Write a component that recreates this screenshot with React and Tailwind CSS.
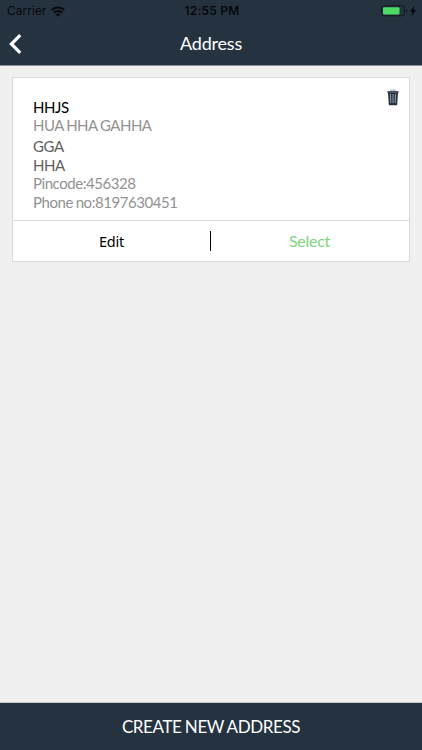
const addresses = [
  {
    id: 1,
    name: 'HHJS',
    street: 'HUA HHA GAHHA',
    city: 'GGA',
    state: 'HHA',
    pincode: '456328',
    phone: '8197630451',
  },
];

function WifiIcon() {
  return (
    <svg className="w-[14px] h-[11px]" viewBox="0 0 14 11" fill="none" stroke="#05080b" strokeWidth="2.1">
      <path d="M0.8 4.1a8.8 8.8 0 0 1 12.4 0" />
      <path d="M3 6.8a5.7 5.7 0 0 1 8 0" />
      <path d="M7 10.8L4.8 8.6a3.1 3.1 0 0 1 4.4 0z" fill="#05080b" stroke="none" />
    </svg>
  );
}

function BatteryIcon() {
  return (
    <svg className="w-[36px] h-[12px]" viewBox="0 0 36 12" fill="none">
      <rect x="0.5" y="0.8" width="23" height="10" rx="2.4" stroke="#10191f" />
      <rect x="2" y="2.2" width="16.5" height="7.2" rx="1" fill="#4cd964" />
      <path d="M25 4v3.8c1.6-.6 1.6-3.2 0-3.8z" fill="#141d25" />
      <path d="M33.6 0.8l-4.6 5.6h2.4L30.4 10.8l4.8-5.7h-2.6z" fill="#05080b" />
    </svg>
  );
}

function TrashIcon() {
  return (
    <svg className="w-[12px] h-[17px]" viewBox="0 0 12 17" fill="none">
      <path d="M3.8 2.4V1.1h4.4v1.3" stroke="#8b949c" strokeWidth="0.9" />
      <path d="M0.4 2.2h11.2v1.6H0.4z" fill="#253341" />
      <path d="M1 3.8h10l-.8 11.6q-.1.9-1 .9H2.8q-.9 0-1-.9z" fill="#253341" />
      <path d="M3.5 5l.3 9M6 5v9M8.5 5l-.3 9" stroke="#a3abb3" strokeWidth="0.9" />
    </svg>
  );
}

function StatusBar() {
  return (
    <div className="grid grid-cols-3 items-center h-[22px] pl-[7px] pr-[5px] font-['Inter',sans-serif] text-[12px] text-[#05080b]">
      <div className="flex items-center gap-[5px]">
        <span>Carrier</span>
        <WifiIcon />
      </div>
      <span className="text-center font-semibold tracking-[0.2px]">12:55 PM</span>
      <div className="flex justify-end">
        <BatteryIcon />
      </div>
    </div>
  );
}

function AddressCard({ address }) {
  return (
    <div className="mx-3 mt-[11px] h-[185px] flex flex-col bg-white border border-[#d9d9d9]">
      <div className="flex justify-between h-[143px] pl-5 pr-[10px] border-b border-[#d9d9d9]">
        <div className="pt-5 text-[15px] leading-[19px] tracking-[-0.45px] [word-spacing:-0.6px] text-[#929292]">
          <p className="text-black">{address.name}</p>
          <p className="-mt-px tracking-[-0.5px]">{address.street}</p>
          <p className="mt-[2px] text-[#606060]">{address.city}</p>
          <p className="text-[#606060]">{address.state}</p>
          <p className="-mt-px">Pincode:{address.pincode}</p>
          <p>Phone no:{address.phone}</p>
        </div>
        <button className="self-start mt-[11px]" aria-label="Delete address">
          <TrashIcon />
        </button>
      </div>
      <div className="flex flex-1 items-center">
        <button className="w-[197px] pt-px text-[14.5px] tracking-[-0.3px] text-black font-['Noto_Sans',sans-serif]">
          Edit
        </button>
        <div className="w-px h-5 bg-black" />
        <button className="w-[197px] pb-px text-[16px] tracking-[-0.25px] text-[#7ed67e]">Select</button>
      </div>
    </div>
  );
}

export default function App() {
  return (
    <div className="flex flex-col h-[750px] w-full bg-[#f0f0f0] font-['Lato',sans-serif]">
      <header className="h-[66px] bg-[#253341] border-b border-[#8b929a]">
        <StatusBar />
        <div className="grid grid-cols-3 items-center h-[43px]">
          <button className="pl-[9px]" aria-label="Back">
            <svg className="w-[13px] h-[20px]" viewBox="0 0 13 20" fill="none" stroke="#fff" strokeWidth="3.2">
              <path d="M11.2 1.2L2.4 10l8.8 8.8" />
            </svg>
          </button>
          <h1 className="text-center text-[18px] tracking-[-0.2px] text-white">Address</h1>
        </div>
      </header>

      <main className="flex-1">
        {addresses.map((address) => (
          <AddressCard key={address.id} address={address} />
        ))}
      </main>

      <button className="h-[48px] bg-[#253341] border-t border-[#c3c7cb] text-[17px] tracking-[-0.4px] [word-spacing:-0.6px] text-white">
        CREATE NEW ADDRESS
      </button>
    </div>
  );
}
